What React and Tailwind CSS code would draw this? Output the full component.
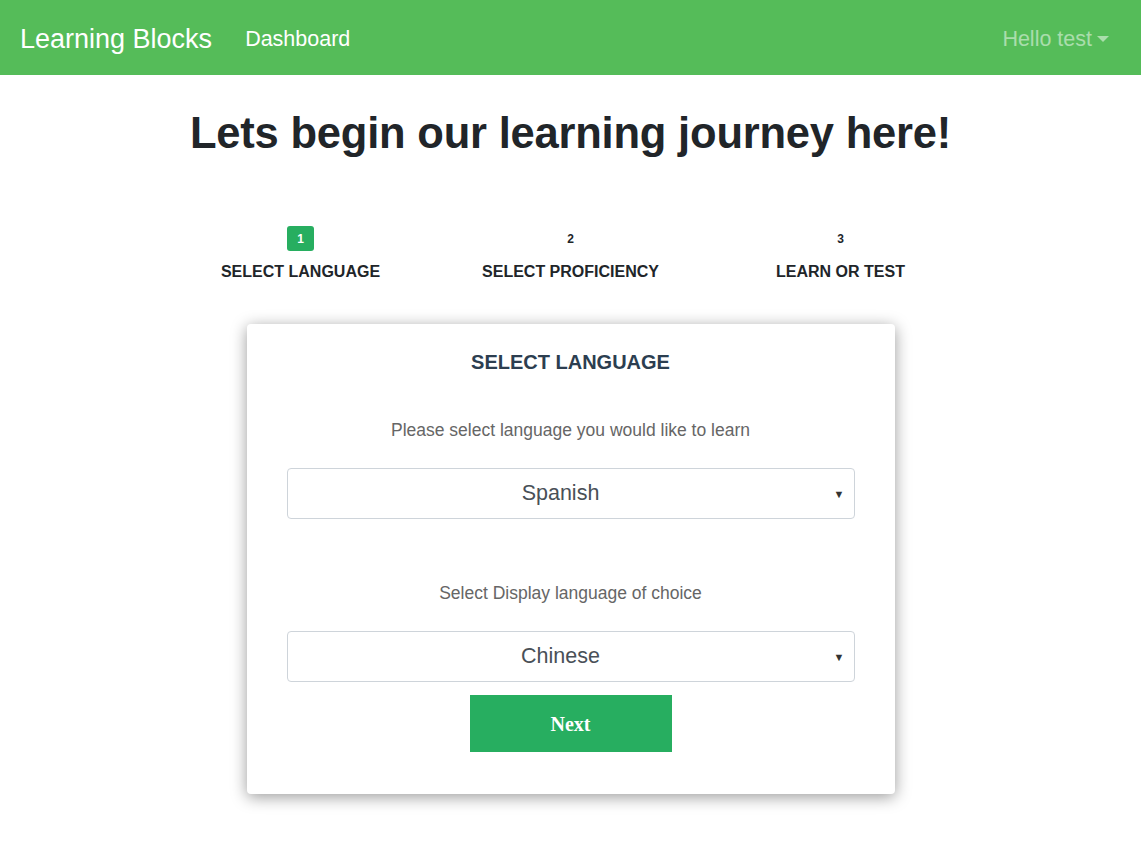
import { useState } from 'react';

const STEPS = [
  { n: 1, label: 'Select Language', active: true },
  { n: 2, label: 'Select Proficiency' },
  { n: 3, label: 'Learn or Test' },
];

function Step({ step }) {
  return (
    <div className="w-[270px] flex flex-col items-center">
      <div className="h-[25px] flex items-center justify-center">
        {step.active ? (
          <span className="w-[27px] h-[25px] rounded-[3px] bg-[#27ae60] text-white text-[12px] font-bold flex items-center justify-center">{step.n}</span>
        ) : (
          <span className="text-[12px] font-bold text-[#212529]">{step.n}</span>
        )}
      </div>
      <p className="mt-[9px] text-[16px] font-bold uppercase text-[#212529] leading-[24px]">{step.label}</p>
    </div>
  );
}

function Picker({ value, options, onChange }) {
  return (
    <div className="relative">
      <select value={value} onChange={e => onChange(e.target.value)}
        className="w-full h-[51px] appearance-none bg-white border border-[#ced4da] rounded-[4px] pr-[20px] text-[21.5px] text-[#495057] text-center [text-align-last:center] outline-none">
        {options.map(o => <option key={o}>{o}</option>)}
      </select>
      <span className="pointer-events-none absolute right-[10px] top-1/2 -translate-y-1/2 text-[11px] text-[#333]">▼</span>
    </div>
  );
}

export default function App() {
  const [lang, setLang] = useState('Spanish');
  const [display, setDisplay] = useState('Chinese');

  return (
    <div className="min-h-[850px] bg-white font-['Liberation_Sans',Arial,sans-serif]">
      <nav className="h-[75px] bg-[#55bc59] flex items-center px-[20px] pt-[3px]">
        <span className="text-[27px] text-white">Learning Blocks</span>
        <a className="ml-[33px] text-[21.5px] text-white">Dashboard</a>
        <div className="ml-auto mr-[12px] flex items-center gap-[5px] text-[21.5px] text-white/50">
          Hello test
          <span className="w-0 h-0 border-l-[6px] border-r-[6px] border-t-[6px] border-l-transparent border-r-transparent border-t-white/50" />
        </div>
      </nav>

      <h1 className="mt-[31px] text-center text-[43.5px] font-bold text-[#212529] tracking-[-0.2px] leading-[55px]">
        Lets begin our learning journey here!
      </h1>

      <div className="mt-[65px] flex justify-center">
        {STEPS.map(s => <Step key={s.n} step={s} />)}
      </div>

      <div className="mt-[40px] mx-auto w-[648px] h-[470px] bg-white rounded-[4px] shadow-[0_3px_16px_rgba(0,0,0,0.4)] px-[40px] pt-[24px]">
        <h2 className="text-center text-[20px] font-bold text-[#2c3e50] leading-[28px]">SELECT LANGUAGE</h2>
        <p className="mt-[42px] text-center text-[17.5px] text-[#666] leading-[24px]">Please select language you would like to learn</p>
        <div className="mt-[26px]">
          <Picker value={lang} onChange={setLang} options={['Spanish', 'French', 'German', 'Chinese']} />
        </div>
        <p className="mt-[62px] text-center text-[17.5px] text-[#666] leading-[24px]">Select Display language of choice</p>
        <div className="mt-[26px]">
          <Picker value={display} onChange={setDisplay} options={['Chinese', 'English', 'Spanish']} />
        </div>
        <div className="mt-[13px] flex justify-center">
          <button className="w-[202px] h-[57px] bg-[#27ae60] text-white text-[20px] font-bold font-['Liberation_Serif',serif]">Next</button>
        </div>
      </div>
    </div>
  );
}
